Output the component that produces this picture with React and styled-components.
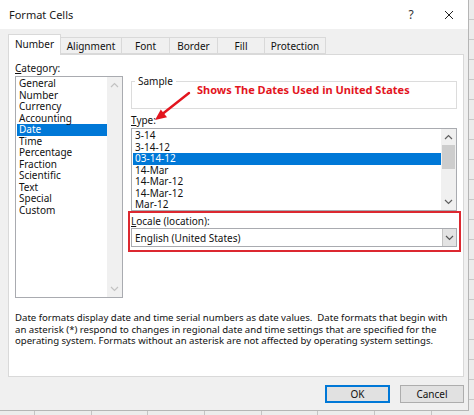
import React from "react";
import styled, { createGlobalStyle } from "styled-components";

const GlobalStyle = createGlobalStyle`
  html, body {
    margin: 0;
    padding: 0;
  }
  body {
    font-family: "Noto Sans", "DejaVu Sans", sans-serif;
    font-size: 10px;
    color: #000;
  }
`;

const Screen = styled.div`
  width: 474px;
  height: 415px;
  overflow: hidden;
  background-color: #ececec;
  background-image: repeating-linear-gradient(
      90deg,
      transparent 0 34px,
      #c4c4c4 34px 35px,
      transparent 35px 56.7px
    ),
    repeating-linear-gradient(
      180deg,
      transparent 0 19px,
      #c9c9c9 19px 20px
    );
`;

const Dialog = styled.div`
  width: 468px;
  height: 410px;
  background: #f0f0f0;
  border-right: 1px solid #b5b5b5;
  border-bottom: 1px solid #b5b5b5;
  display: flex;
  flex-direction: column;
`;

const TitleBar = styled.div`
  height: 29px;
  background: #fff;
  display: flex;
  align-items: center;
  flex-shrink: 0;
`;

const Title = styled.div`
  flex: 1;
  padding-left: 9px;
  font-size: 11px;
  line-height: 14px;
  color: #1a1a1a;
`;

const CaptionButton = styled.div`
  width: 38px;
  height: 29px;
  display: flex;
  align-items: center;
  justify-content: center;
  font-size: 12px;
  color: #333;
`;

const Body = styled.div`
  flex: 1;
  padding: 5px 4px 0 8px;
  display: flex;
  flex-direction: column;
`;

const TabStrip = styled.div`
  display: flex;
  align-items: flex-end;
  height: 20px;
  position: relative;
  z-index: 1;
`;

const Tab = styled.div`
  width: ${(p) => p.$width}px;
  height: ${(p) => (p.$active ? 21 : 17)}px;
  margin-bottom: ${(p) => (p.$active ? -1 : 0)}px;
  box-sizing: border-box;
  display: flex;
  align-items: center;
  justify-content: center;
  padding-bottom: ${(p) => (p.$active ? 2 : 0)}px;
  background: ${(p) => (p.$active ? "#fff" : "#f0f0f0")};
  border: 1px solid #d9d9d9;
  border-bottom: ${(p) => (p.$active ? "none" : "1px solid #d9d9d9")};
  border-left: ${(p) => (p.$first || p.$active ? "1px solid #d9d9d9" : "none")};
  font-size: 10px;
  line-height: 12px;
  color: #111;
`;

const Panel = styled.div`
  width: 456px;
  height: 323px;
  box-sizing: border-box;
  background: #fff;
  border: 1px solid #d9d9d9;
  padding: 7px 6px 0 6px;
`;

const Columns = styled.div`
  display: flex;
  gap: 8px;
  height: 236px;
`;

const LeftCol = styled.div`
  width: 108px;
  display: flex;
  flex-direction: column;
`;

const RightCol = styled.div`
  width: 326px;
  position: relative;
  display: flex;
  flex-direction: column;
`;

const Label = styled.div`
  line-height: 12px;
  margin-top: ${(p) => p.$top || 0}px;
  margin-bottom: ${(p) => p.$bottom || 0}px;
  color: #111;

  u {
    text-decoration: underline;
    text-underline-offset: 1px;
  }
`;

const ListBox = styled.div`
  height: ${(p) => p.$height}px;
  box-sizing: border-box;
  border: 1px solid #a9abb0;
  display: flex;
  background: #fff;
`;

const Items = styled.div`
  flex: 1;
  padding: 1px 0 0 1px;
  overflow: hidden;
`;

const Item = styled.div`
  height: 11.55px;
  line-height: 11.55px;
  padding-left: ${(p) => p.$indent}px;
  white-space: nowrap;
  background: ${(p) => (p.$selected ? "#0078d7" : "transparent")};
  color: ${(p) => (p.$selected ? "#fff" : "#111")};
`;

const ScrollBar = styled.div`
  width: 15px;
  background: #f0f0f0;
  display: flex;
  flex-direction: column;
`;

const ScrollArrow = styled.div`
  height: 16px;
  display: flex;
  align-items: center;
  justify-content: center;
`;

const ScrollTrack = styled.div`
  flex: 1;
  padding: 0 1px;
`;

const Thumb = styled.div`
  height: 24px;
  background: #cdcdcd;
`;

const GroupBox = styled.div`
  position: relative;
  margin-top: 19px;
  height: 28px;
  box-sizing: border-box;
  border: 1px solid #dcdcdc;
  padding: 1px 0 0 65px;
`;

const GroupLegend = styled.span`
  position: absolute;
  top: -7px;
  left: 3px;
  padding: 0 3px;
  background: #fff;
  line-height: 12px;
  color: #111;
`;

const Annotation = styled.div`
  color: #e3151e;
  font-weight: 700;
  font-size: 11px;
  line-height: 13px;
  white-space: nowrap;
`;

const ArrowLayer = styled.svg`
  position: absolute;
  left: 0;
  top: 0;
  pointer-events: none;
`;

const Highlight = styled.div`
  margin: 0 -4px 0 -3px;
  border: 2px solid #dc2830;
  padding: 2px 2px 3px 1px;
`;

const Combo = styled.div`
  height: 19px;
  box-sizing: border-box;
  border: 1px solid #a9abb0;
  display: flex;
  align-items: stretch;
  background: #fff;
`;

const ComboText = styled.div`
  flex: 1;
  padding-left: 3px;
  display: flex;
  align-items: center;
  color: #111;
`;

const ComboButton = styled.div`
  width: 13px;
  background: #e3e3e3;
  border-left: 1px solid #c4c4c4;
  display: flex;
  align-items: center;
  justify-content: center;
`;

const Description = styled.p`
  margin: 14px 0 0 0;
  font-size: 9.6px;
  line-height: 11.6px;
  white-space: nowrap;
  color: #111;
`;

const Buttons = styled.div`
  display: flex;
  justify-content: flex-end;
  gap: 10px;
  margin-top: 8px;
  width: 456px;
`;

const Button = styled.div`
  width: ${(p) => p.$width}px;
  height: 18px;
  box-sizing: border-box;
  display: flex;
  align-items: center;
  justify-content: center;
  background: #e1e1e1;
  border: ${(p) => (p.$default ? "2px solid #0078d7" : "1px solid #adadad")};
  color: #111;
  line-height: 12px;
`;

const Chevron = ({ up, color }) => (
  <svg width="9" height="6" viewBox="0 0 9 6">
    <polyline
      points={up ? "1,5 4.5,1.5 8,5" : "1,1 4.5,4.5 8,1"}
      fill="none"
      stroke={color}
      strokeWidth="1.2"
    />
  </svg>
);

const categories = [
  "General",
  "Number",
  "Currency",
  "Accounting",
  "Date",
  "Time",
  "Percentage",
  "Fraction",
  "Scientific",
  "Text",
  "Special",
  "Custom",
];

const dateTypes = [
  "3-14",
  "3-14-12",
  "03-14-12",
  "14-Mar",
  "14-Mar-12",
  "14-Mar-12",
  "Mar-12",
];

const tabs = [
  { name: "Number", width: 53 },
  { name: "Alignment", width: 61 },
  { name: "Font", width: 48 },
  { name: "Border", width: 48 },
  { name: "Fill", width: 47 },
  { name: "Protection", width: 61 },
];

export default function App() {
  return (
    <>
      <GlobalStyle />
      <Screen>
        <Dialog>
          <TitleBar>
            <Title>Format Cells</Title>
            <CaptionButton>?</CaptionButton>
            <CaptionButton>
              <svg width="10" height="10" viewBox="0 0 10 10">
                <path d="M1 1 L9 9 M9 1 L1 9" stroke="#222" strokeWidth="1" />
              </svg>
            </CaptionButton>
          </TitleBar>
          <Body>
            <TabStrip>
              {tabs.map((t, i) => (
                <Tab
                  key={t.name}
                  $width={t.width}
                  $active={i === 0}
                  $first={i === 0}
                >
                  {t.name}
                </Tab>
              ))}
            </TabStrip>
            <Panel>
              <Columns>
                <LeftCol>
                  <Label $bottom={2}>
                    <u>C</u>ategory:
                  </Label>
                  <ListBox $height={222}>
                    <Items>
                      {categories.map((c) => (
                        <Item key={c} $indent={2} $selected={c === "Date"}>
                          {c}
                        </Item>
                      ))}
                    </Items>
                    <ScrollBar>
                      <ScrollArrow>
                        <Chevron up color="#c2c2c2" />
                      </ScrollArrow>
                      <ScrollTrack />
                      <ScrollArrow>
                        <Chevron color="#c2c2c2" />
                      </ScrollArrow>
                    </ScrollBar>
                  </ListBox>
                </LeftCol>
                <RightCol>
                  <GroupBox>
                    <GroupLegend>Sample</GroupLegend>
                    <Annotation>Shows The Dates Used in United States</Annotation>
                  </GroupBox>
                  <Label $top={5} $bottom={2}>
                    <u>T</u>ype:
                  </Label>
                  <ListBox $height={83}>
                    <Items>
                      {dateTypes.map((d, i) => (
                        <Item key={i} $indent={2} $selected={i === 2}>
                          {d}
                        </Item>
                      ))}
                    </Items>
                    <ScrollBar>
                      <ScrollArrow>
                        <Chevron up color="#606060" />
                      </ScrollArrow>
                      <ScrollTrack>
                        <Thumb />
                      </ScrollTrack>
                      <ScrollArrow>
                        <Chevron color="#606060" />
                      </ScrollArrow>
                    </ScrollBar>
                  </ListBox>
                  <Highlight>
                    <Label $top={0} $bottom={1}>
                      <u>L</u>ocale (location):
                    </Label>
                    <Combo>
                      <ComboText>English (United States)</ComboText>
                      <ComboButton>
                        <Chevron color="#555" />
                      </ComboButton>
                    </Combo>
                  </Highlight>
                  <ArrowLayer width="80" height="70" viewBox="0 0 80 70">
                    <line
                      x1="58"
                      y1="31"
                      x2="32"
                      y2="51.5"
                      stroke="#e3151e"
                      strokeWidth="2.4"
                      strokeLinecap="round"
                    />
                    <polygon
                      points="24,58 36,55.2 29.8,47.5"
                      fill="#e3151e"
                    />
                  </ArrowLayer>
                </RightCol>
              </Columns>
              <Description>
                Date formats display date and time serial numbers as date
                values.&nbsp; Date formats that begin with
                <br />
                an asterisk (*) respond to changes in regional date and time
                settings that are specified for the
                <br />
                operating system. Formats without an asterisk are not affected
                by operating system settings.
              </Description>
            </Panel>
            <Buttons>
              <Button $width={65} $default>
                OK
              </Button>
              <Button $width={64}>Cancel</Button>
            </Buttons>
          </Body>
        </Dialog>
      </Screen>
    </>
  );
}
